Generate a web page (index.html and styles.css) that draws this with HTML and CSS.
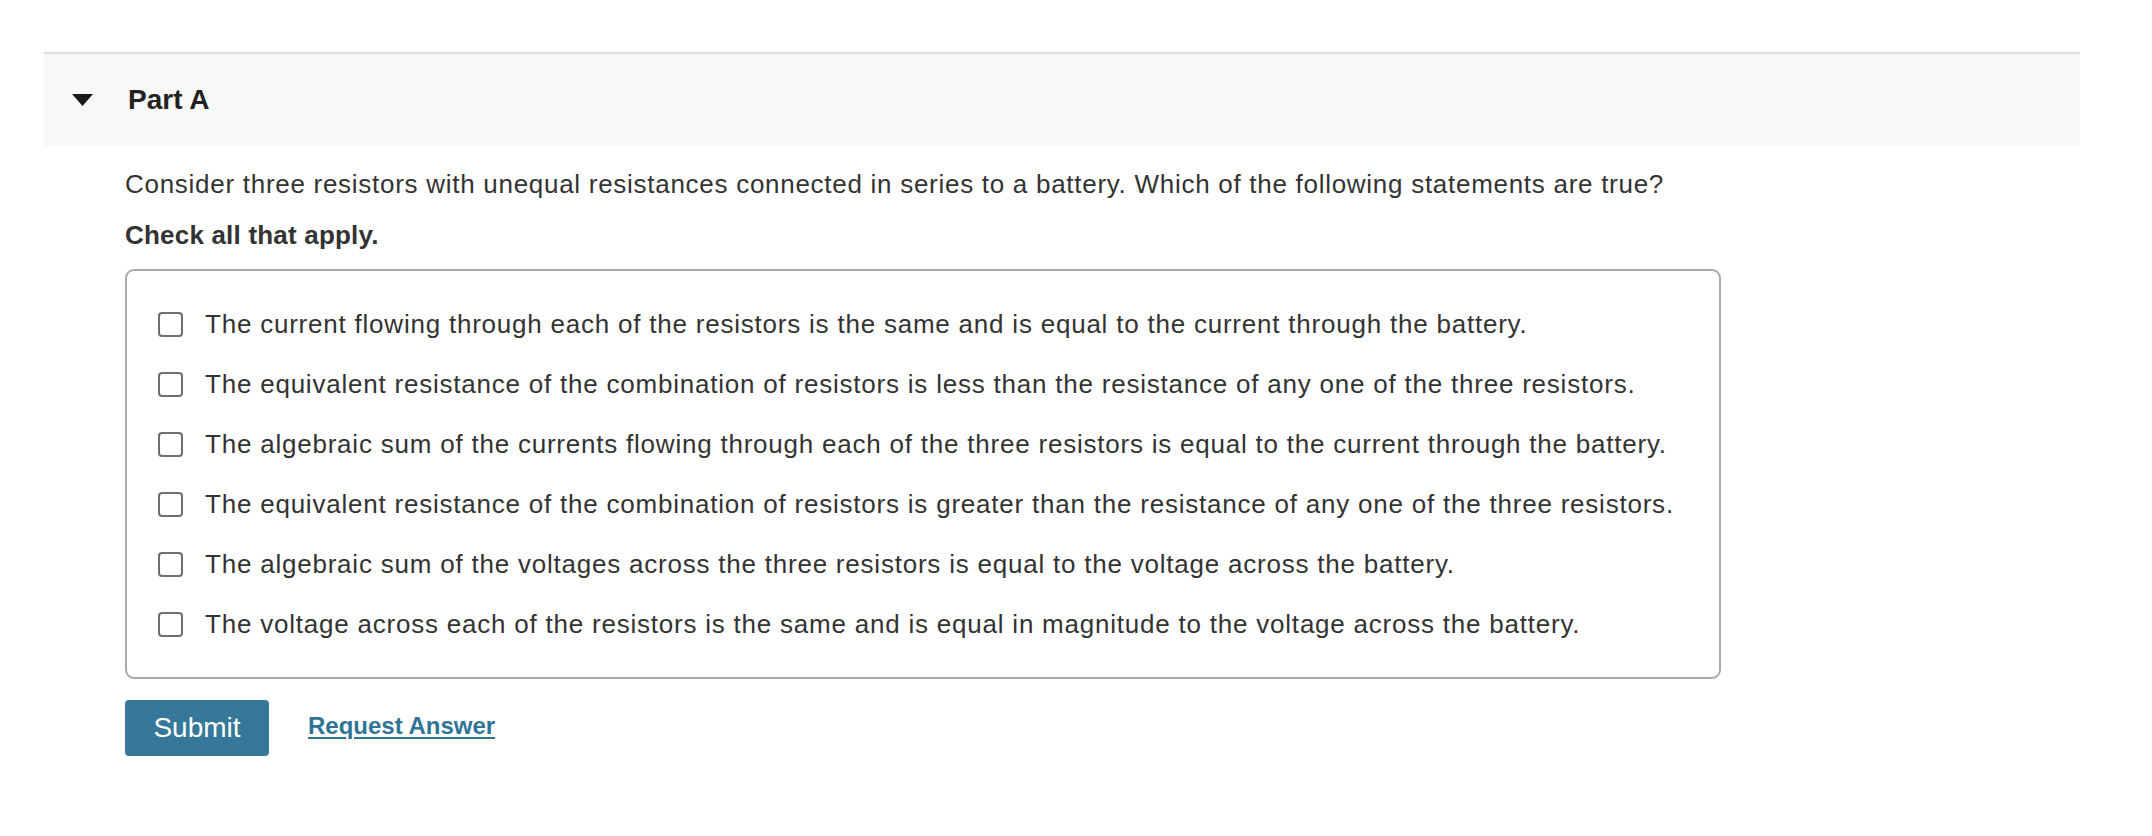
FILE: index.html
```html
<!DOCTYPE html>
<html>
<head>
<meta charset="utf-8">
<link rel="stylesheet" href="styles.css">
</head>
<body>
<div class="page">
  <div class="part-header">
    <svg class="caret" width="21" height="12" viewBox="0 0 21 12"><polygon points="0,0 21,0 10.5,12" fill="#1a1a1a"/></svg>
    <span class="part-title">Part A</span>
  </div>
  <div class="content">
    <p class="question">Consider three resistors with unequal resistances connected in series to a battery. Which of the following statements are true?</p>
    <p class="instruction">Check all that apply.</p>
    <div class="options">
      <label class="option"><span class="box"></span><span class="opt-text">The current flowing through each of the resistors is the same and is equal to the current through the battery.</span></label>
      <label class="option"><span class="box"></span><span class="opt-text">The equivalent resistance of the combination of resistors is less than the resistance of any one of the three resistors.</span></label>
      <label class="option"><span class="box"></span><span class="opt-text">The algebraic sum of the currents flowing through each of the three resistors is equal to the current through the battery.</span></label>
      <label class="option"><span class="box"></span><span class="opt-text">The equivalent resistance of the combination of resistors is greater than the resistance of any one of the three resistors.</span></label>
      <label class="option"><span class="box"></span><span class="opt-text">The algebraic sum of the voltages across the three resistors is equal to the voltage across the battery.</span></label>
      <label class="option"><span class="box"></span><span class="opt-text">The voltage across each of the resistors is the same and is equal in magnitude to the voltage across the battery.</span></label>
    </div>
    <div class="actions">
      <button class="submit">Submit</button>
      <a class="request" href="#">Request Answer</a>
    </div>
  </div>
</div>
</body>
</html>
```
FILE: styles.css
```css
html, body {
  margin: 0;
  padding: 0;
  background: #ffffff;
}
body {
  font-family: "Liberation Sans", Arial, sans-serif;
  color: #333333;
}
.page {
  padding-top: 52px;
  margin-left: 44px;
  width: 2036px;
}
.part-header {
  display: flex;
  align-items: center;
  border-top: 2px solid #e0e0e0;
  background: #f8f8f8;
  box-sizing: border-box;
  height: 94px;
  padding-left: 28px;
}
.caret {
  display: block;
  margin-right: 35px;
}
.part-title {
  font-size: 28px;
  font-weight: bold;
  color: #222222;
}
.content {
  padding-left: 81px;
}
.question {
  margin: 0;
  padding-top: 22px;
  font-size: 26px;
  line-height: 32px;
  letter-spacing: 0.72px;
}
.instruction {
  margin: 0;
  padding-top: 19px;
  font-size: 26px;
  line-height: 32px;
  font-weight: bold;
  letter-spacing: 0.2px;
}
.options {
  margin-top: 18px;
  width: 1596px;
  box-sizing: border-box;
  border: 2px solid #a9a9a9;
  border-radius: 9px;
  padding: 23px 0 23px 31px;
}
.option {
  display: flex;
  align-items: center;
  height: 60px;
  font-size: 26px;
  letter-spacing: 0.78px;
}
.box {
  width: 25px;
  height: 25px;
  box-sizing: border-box;
  border: 2px solid #6f6f6f;
  border-radius: 4px;
  background: #fff;
  flex: none;
  margin-right: 22px;
}
.opt-text {
  color: #333333;
}
.actions {
  display: flex;
  align-items: center;
  margin-top: 21px;
}
.submit {
  width: 144px;
  height: 56px;
  border: none;
  border-radius: 4px;
  background: #357899;
  color: #ffffff;
  font-family: "Liberation Sans", Arial, sans-serif;
  font-size: 28px;
  padding: 0;
}
.request {
  margin-left: 39px;
  margin-bottom: 4px;
  font-size: 24px;
  font-weight: bold;
  color: #2f7497;
  text-decoration: underline;
  text-underline-offset: 3px;
}
```
